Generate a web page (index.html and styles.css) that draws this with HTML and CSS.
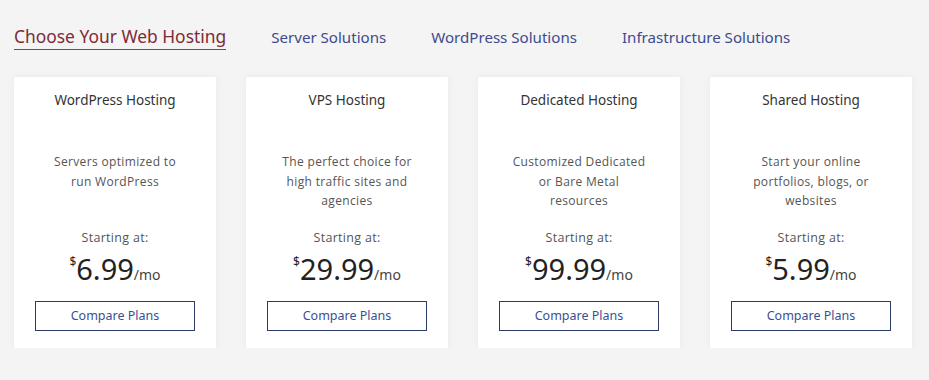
FILE: index.html
```html
<!DOCTYPE html>
<html lang="en">
<head>
    <meta charset="UTF-8">
    <meta name="viewport" content="width=device-width, initial-scale=1.0">
    <title>Choose Your Web Hosting</title>
    <link rel="stylesheet" href="styles.css">
</head>
<body>
    <nav class="tabs">
        <a href="#" class="tab active">Choose Your Web Hosting</a>
        <a href="#" class="tab">Server Solutions</a>
        <a href="#" class="tab">WordPress Solutions</a>
        <a href="#" class="tab">Infrastructure Solutions</a>
    </nav>

    <div class="plans">
        <div class="plan">
            <h3>WordPress Hosting</h3>
            <p class="desc">Servers optimized to<br>run WordPress</p>
            <p class="start">Starting at:</p>
            <p class="price"><sup>$</sup>6.99<span>/mo</span></p>
            <a href="#" class="compare">Compare Plans</a>
        </div>
        <div class="plan">
            <h3>VPS Hosting</h3>
            <p class="desc">The perfect choice for<br>high traffic sites and<br>agencies</p>
            <p class="start">Starting at:</p>
            <p class="price"><sup>$</sup>29.99<span>/mo</span></p>
            <a href="#" class="compare">Compare Plans</a>
        </div>
        <div class="plan">
            <h3>Dedicated Hosting</h3>
            <p class="desc">Customized Dedicated<br>or Bare Metal<br>resources</p>
            <p class="start">Starting at:</p>
            <p class="price"><sup>$</sup>99.99<span>/mo</span></p>
            <a href="#" class="compare">Compare Plans</a>
        </div>
        <div class="plan">
            <h3>Shared Hosting</h3>
            <p class="desc">Start your online<br>portfolios, blogs, or<br>websites</p>
            <p class="start">Starting at:</p>
            <p class="price"><sup>$</sup>5.99<span>/mo</span></p>
            <a href="#" class="compare">Compare Plans</a>
        </div>
    </div>
</body>
</html>
```

FILE: styles.css
```css
body {
    margin: 0;
    padding: 0 14px;
    background: #f4f4f4;
    font-family: "Noto Sans", Arial, sans-serif;
    color: #333;
}

.tabs {
    display: flex;
    align-items: flex-end;
    gap: 45px;
    height: 50px;
}

.tab {
    text-decoration: none;
    color: #3d4b8e;
    font-size: 15.1px;
    line-height: 20px;
    padding-bottom: 3px;
}

.tab.active {
    color: #7d2b35;
    font-size: 17.4px;
    line-height: 22px;
    padding-bottom: 2px;
    border-bottom: 1.5px solid #a03a3a;
}

.plans {
    display: flex;
    gap: 30px;
    margin-top: 27px;
}

.plan {
    width: 202px;
    height: 271px;
    box-sizing: border-box;
    background: #fff;
    box-shadow: 0 0 8px rgba(0, 0, 0, 0.05);
    text-align: center;
    padding-top: 13px;
}

.plan h3 {
    margin: 0;
    font-size: 13.5px;
    font-weight: normal;
    line-height: 20px;
    color: #333;
}

.desc {
    margin: 42px 0 0;
    height: 60px;
    font-family: "Open Sans", Arial, sans-serif;
    font-size: 12px;
    letter-spacing: 0.35px;
    line-height: 19.5px;
    color: #555;
}

.start {
    margin: 16px 0 0;
    font-family: "Open Sans", Arial, sans-serif;
    font-size: 12.5px;
    letter-spacing: 0.3px;
    line-height: 20px;
    color: #555;
}

.price {
    margin: -4px 0 0;
    font-size: 29px;
    line-height: 36px;
    color: #222;
}

.price sup {
    font-size: 12px;
    vertical-align: 14px;
}

.price span {
    font-size: 14px;
    color: #444;
}

.compare {
    display: block;
    width: 160px;
    height: 30px;
    box-sizing: border-box;
    margin: 8px auto 0;
    border: 1px solid #2c3a66;
    color: #3a4f92;
    text-decoration: none;
    font-size: 12.5px;
    line-height: 28px;
}
```
